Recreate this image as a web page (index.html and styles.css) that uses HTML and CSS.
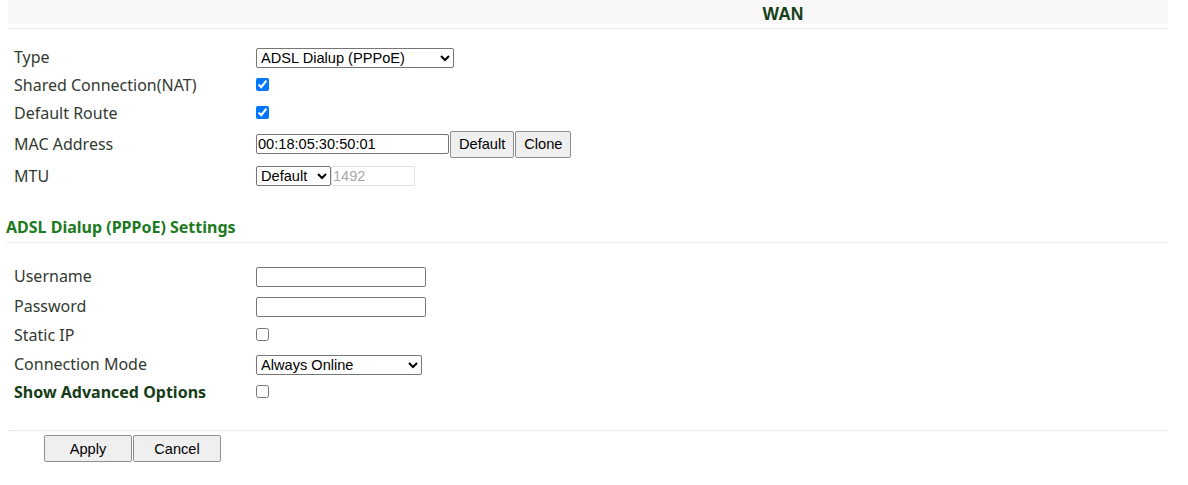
FILE: index.html
```html
<!DOCTYPE html>
<html lang="en">
<head>
    <meta charset="UTF-8">
    <title>WAN</title>
    <link rel="stylesheet" href="styles.css">
</head>
<body>
    <div class="page">
        <div class="title-bar">
            <span class="title">WAN</span>
        </div>

        <div class="form form-top">
            <div class="row">
                <label>Type</label>
                <div>
                    <select class="sel-type">
                        <option>ADSL Dialup (PPPoE)</option>
                        <option>Static IP</option>
                        <option>DHCP</option>
                    </select>
                </div>
            </div>
            <div class="row">
                <label>Shared Connection(NAT)</label>
                <div><input type="checkbox" checked></div>
            </div>
            <div class="row">
                <label>Default Route</label>
                <div><input type="checkbox" checked></div>
            </div>
            <div class="row row-mac">
                <label>MAC Address</label>
                <div class="inline">
                    <input type="text" class="txt-mac" value="00:18:05:30:50:01">
                    <button class="btn">Default</button>
                    <button class="btn">Clone</button>
                </div>
            </div>
            <div class="row row-mtu">
                <label>MTU</label>
                <div class="inline">
                    <select class="sel-mtu">
                        <option>Default</option>
                        <option>Manual</option>
                    </select>
                    <input type="text" class="txt-mtu" value="1492" disabled>
                </div>
            </div>
        </div>

        <div class="section-head">ADSL Dialup (PPPoE) Settings</div>

        <div class="form form-pppoe">
            <div class="row row-30">
                <label>Username</label>
                <div><input type="text" class="txt-user"></div>
            </div>
            <div class="row row-30">
                <label>Password</label>
                <div><input type="password" class="txt-user"></div>
            </div>
            <div class="row">
                <label>Static IP</label>
                <div><input type="checkbox"></div>
            </div>
            <div class="row row-30">
                <label>Connection Mode</label>
                <div>
                    <select class="sel-mode">
                        <option>Always Online</option>
                        <option>On Demand</option>
                        <option>Manual</option>
                    </select>
                </div>
            </div>
            <div class="row row-26">
                <label class="strong">Show Advanced Options</label>
                <div><input type="checkbox"></div>
            </div>
        </div>

        <div class="actions">
            <button class="btn btn-wide">Apply</button>
            <button class="btn btn-wide">Cancel</button>
        </div>
    </div>
</body>
</html>
```

FILE: styles.css
```css
body {
    margin: 0;
    background-color: #fff;
    font-family: "Noto Sans", "Open Sans", sans-serif;
    color: #333;
}

.page {
    width: 1160px;
    margin-left: 8px;
}

.title-bar {
    height: 29px;
    border-bottom: 1px solid #ececec;
    background: linear-gradient(#f8f8f8 0, #f8f8f8 24px, #fff 24px);
    text-align: center;
    padding-left: 390px;
    box-sizing: border-box;
}

.title {
    display: inline-block;
    margin-top: 4px;
    font-family: "Liberation Sans", Arial, sans-serif;
    font-weight: bold;
    font-size: 17.5px;
    color: #17401a;
}

.form {
    padding-left: 6px;
}

.form-top {
    padding-top: 14px;
}

.form-pppoe {
    padding-top: 18px;
}

.row {
    display: grid;
    grid-template-columns: 242px 1fr;
    align-items: center;
    height: 28px;
}

.row-mac {
    height: 34px;
}

.row-mtu {
    height: 30px;
}

.row-30 {
    height: 30px;
}

.row-26 {
    height: 26px;
}

.row label {
    font-size: 16px;
    color: #323a32;
}

.row label.strong {
    font-weight: bold;
    color: #163c18;
}

.inline {
    display: flex;
    align-items: center;
}

input,
select,
button {
    font-family: "Liberation Sans", Arial, sans-serif;
    font-size: 14.6px;
    color: #000;
    box-sizing: border-box;
}

input[type="checkbox"] {
    width: 13px;
    height: 13px;
    margin: 0;
    accent-color: #0075ff;
}

select {
    height: 20px;
    padding: 0;
    border: 1px solid #767676;
    border-radius: 2px;
    background-color: #fff;
}

.sel-type {
    width: 198px;
}

.sel-mtu {
    width: 75px;
}

.sel-mode {
    width: 166px;
}

input[type="text"],
input[type="password"] {
    height: 20px;
    padding: 0 1px;
    border: 1px solid #767676;
    border-radius: 2px;
    margin: 0;
}

.txt-mac {
    width: 193px;
}

.txt-mtu {
    width: 84px;
    border-color: #e2e2e2 !important;
    background-color: #fff;
    color: #a8a8a8;
}

.txt-user {
    width: 170px;
}

.btn {
    height: 27px;
    padding: 0 8px;
    margin: 0 0 0 1px;
    border: 1px solid #8f8f8f;
    border-radius: 2px;
    background-color: #efefef;
    cursor: pointer;
}

.section-head {
    margin-top: 24px;
    height: 27px;
    line-height: 24px;
    margin-left: -2px;
    border-bottom: 1px solid #ececec;
    font-size: 16px;
    font-weight: bold;
    color: #1c7a22;
}

.actions {
    margin-top: 25px;
    padding: 4px 0 0 36px;
    border-top: 1px dotted #dcdcdc;
    display: flex;
}

.btn-wide {
    width: 88px;
    margin: 0 1px 0 0;
}
```
